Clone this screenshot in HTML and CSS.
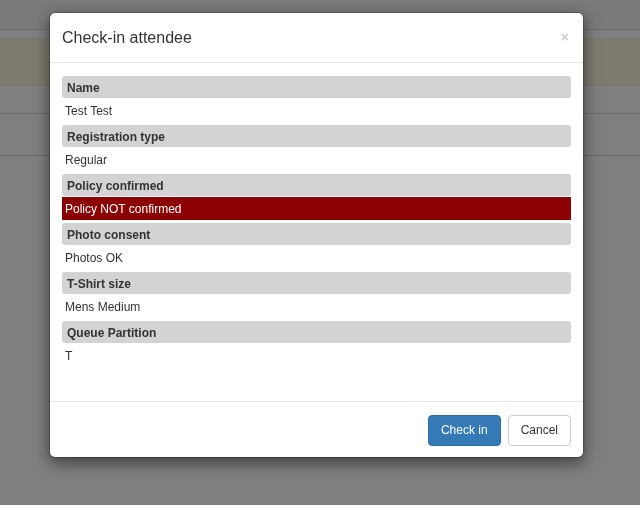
FILE: index.html
```html
<!DOCTYPE html>
<html>
<head>
<title>Check-in</title>
<link rel="stylesheet" href="styles.css">
</head>
<body>
	<header class="topbar"></header>
	<div class="notice"></div>
	<div class="table">
		<div class="table-row"></div>
		<div class="table-row"></div>
	</div>

	<div class="backdrop"></div>
	<div class="modal">
		<div class="modal-header">
			<button class="close" type="button">&times;</button>
			<h4 class="modal-title">Check-in attendee</h4>
		</div>
		<div class="modal-body">
			<dl class="details">
				<dt>Name</dt>
				<dd>Test Test</dd>
				<dt>Registration type</dt>
				<dd>Regular</dd>
				<dt>Policy confirmed</dt>
				<dd class="warn">Policy NOT confirmed</dd>
				<dt>Photo consent</dt>
				<dd>Photos OK</dd>
				<dt>T-Shirt size</dt>
				<dd>Mens Medium</dd>
				<dt>Queue Partition</dt>
				<dd>T</dd>
			</dl>
		</div>
		<div class="modal-footer">
			<button class="btn btn-primary" type="button">Check in</button>
			<button class="btn btn-default" type="button">Cancel</button>
		</div>
	</div>
</body>
</html>
```

FILE: styles.css
```css
body {
	margin: 0;
	font-family: "Liberation Sans", Arial, sans-serif;
	font-size: 12px;
	color: #333;
	background: #fff;
	height: 100vh;
}
.topbar {
	height: 29px;
	background: #f4f4f4;
	border-bottom: 1px solid #dcdcdc;
}
.notice {
	margin-top: 8px;
	height: 46px;
	background: #fbf7e1;
	border-top: 1px solid #f6ebcf;
	border-bottom: 1px solid #f6ebcf;
}
.table {
	padding-top: 27px;
}
.table-row {
	height: 41px;
	border-top: 1px solid #d6d6d6;
}
.backdrop {
	position: fixed;
	inset: 0;
	background: rgba(0, 0, 0, 0.5);
}
.modal {
	position: absolute;
	left: 49px;
	top: 12px;
	width: 535px;
	box-sizing: border-box;
	background: #fff;
	border: 1px solid rgba(0, 0, 0, 0.2);
	border-radius: 6px;
	box-shadow: 0 5px 15px rgba(0, 0, 0, 0.5);
	background-clip: padding-box;
}
.modal-header {
	padding: 12px 12px;
	border-bottom: 1px solid #e5e5e5;
}
.modal-title {
	margin: 0;
	font-size: 16px;
	font-weight: normal;
	line-height: 25px;
}
.close {
	float: right;
	margin: 3px 2px 0 0;
	padding: 0;
	border: 0;
	background: none;
	font-family: inherit;
	font-size: 14px;
	font-weight: bold;
	line-height: 18px;
	color: #000;
	opacity: 0.2;
	cursor: pointer;
}
.modal-body {
	padding: 13px 12px 31px;
}
.details {
	margin: 0;
}
.details dt {
	background: #d3d3d3;
	border-radius: 3px;
	padding: 3px 5px 1px;
	line-height: 18px;
	font-weight: bold;
	margin-bottom: 1px;
}
.details dd {
	margin: 0 0 3px;
	padding: 3px 3px 1px;
	line-height: 19px;
}
.details dd.warn {
	background: #8b0000;
	color: #fff;
}
.modal-footer {
	display: flex;
	justify-content: flex-end;
	gap: 7px;
	padding: 13px 12px 11px;
	border-top: 1px solid #e5e5e5;
}
.btn {
	font-family: inherit;
	font-size: 12px;
	line-height: 19px;
	padding: 5px 12px;
	border: 1px solid transparent;
	border-radius: 4px;
	cursor: pointer;
}
.btn-primary {
	background: #337ab7;
	border-color: #2e6da4;
	color: #fff;
}
.btn-default {
	background: #fff;
	border-color: #ccc;
	color: #333;
}
```
